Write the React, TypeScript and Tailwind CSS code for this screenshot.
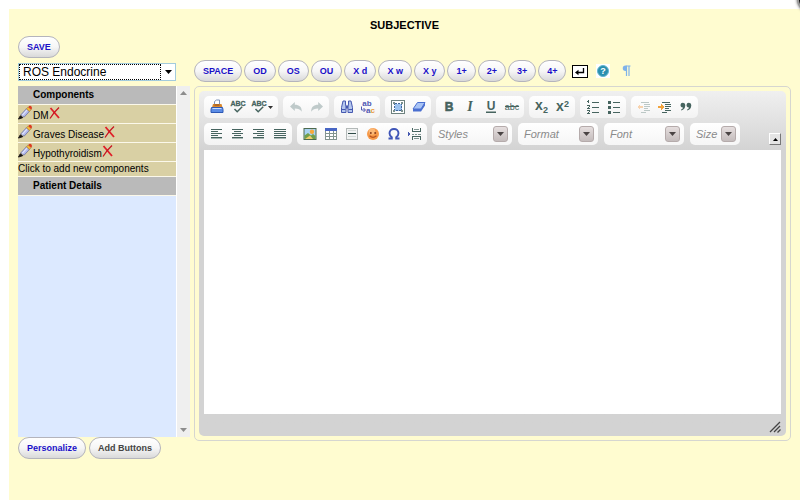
import { useState } from "react";
import type { ReactNode } from "react";

const TEAL = "#46645f";

function Icon({ children, crisp = false }: { children: ReactNode; crisp?: boolean }) {
  return (
    <svg
      viewBox="0 0 16 16"
      className="h-4 w-4 shrink-0 overflow-visible"
      shapeRendering={crisp ? "crispEdges" : "auto"}
      fontFamily="'Liberation Sans', Arial, sans-serif"
      aria-hidden
    >
      {children}
    </svg>
  );
}

/* Horizontal strokes given as [x, y, width] */
function Lines({ rows, color = TEAL }: { rows: number[][]; color?: string }) {
  return (
    <>
      {rows.map(([x, y, w]) => (
        <rect key={`${x}-${y}`} x={x} y={y} width={w} height="1" fill={color} />
      ))}
    </>
  );
}

const PrintIcon = () => (
  <Icon>
    <path d="M5.5 6.5v-4l2-1.500h3v5.500z" fill="#fff" stroke="#7d93b8" />
    <path d="M4 5h8.500l1 3.500H3z" fill="#d9882f" />
    <path d="M5.500 6h5" stroke="#8a4a18" />
    <path d="M2.500 8.500h11l.500 2v3H2v-3z" fill="#5b8ce6" stroke="#2d58b4" />
    <path d="M3.500 9.500h9" stroke="#c9dcfa" />
  </Icon>
);

const SpellIcon = () => (
  <Icon>
    <text x="8" y="7" textAnchor="middle" fontSize="7" fontWeight="700" fill={TEAL} stroke={TEAL} strokeWidth=".3">
      ABC
    </text>
    <path d="M4.500 10 7.200 12.800l5-5" fill="none" stroke={TEAL} strokeWidth="1.500" />
  </Icon>
);

const UndoIcon = () => (
  <Icon>
    <path d="M2 7.500 6.800 3v2.800c4.500 0 7 2 7 7-1.500-2.700-3.700-3.400-7-3.400V12z" fill="#bfcaca" />
  </Icon>
);

const RedoIcon = () => (
  <Icon>
    <path d="M14 7.500 9.200 3v2.800c-4.500 0-7 2-7 7 1.500-2.700 3.700-3.400 7-3.400V12z" fill="#bfcaca" />
  </Icon>
);

const FindIcon = () => (
  <Icon>
    <path d="M4 2h2.500v3L7 8v5.500H2.500V8.500zM12 2H9.500v3L9 8v5.500h4.500V8.500z" fill="#b4c6ee" stroke="#4659b0" />
    <path d="M7 6.500h2v3H7z" fill="#4659b0" />
    <path d="M3 10.500h3.500M9.500 10.500H13" stroke="#4659b0" />
  </Icon>
);

const ReplaceIcon = () => (
  <Icon>
    <text x="7" y="6.500" textAnchor="middle" fontSize="8" fontWeight="700" fill="#5058b4">
      ab
    </text>
    <text x="6" y="14" fontSize="8" fontWeight="700" fill="#5058b4">
      a<tspan fill="#e89a3a">c</tspan>
    </text>
    <path d="M1.500 7.500v3.500h3.500M3.500 9 5.500 11l-2 2" fill="none" stroke="#5058b4" />
  </Icon>
);

const SelectAllIcon = () => (
  <Icon crisp>
    <rect x="1.500" y="1.500" width="13" height="13" fill="#fff" stroke="#6e827f" />
    <rect x="4.500" y="4.500" width="7" height="7" fill="#9cc3ef" stroke="#41679a" strokeDasharray="2 1" />
    <path d="M3 3h2v2H3zM11 3h2v2h-2zM3 11h2v2H3zM11 11h2v2h-2z" fill="#7d928f" />
  </Icon>
);

const EraserIcon = () => (
  <Icon>
    <path d="M2 10 6.500 3.500h7.500L10 10z" fill="#a9c4f5" stroke="#4a6fd0" strokeLinejoin="round" />
    <path d="M2 10h8l4-6.500v3L10 12.500H2z" fill="#4a6fd0" />
  </Icon>
);

const BoldIcon = () => (
  <Icon>
    <text x="8" y="12" textAnchor="middle" fontSize="12" fontWeight="700" fill={TEAL} stroke={TEAL} strokeWidth=".6">
      B
    </text>
  </Icon>
);

const ItalicIcon = () => (
  <Icon>
    <text
      x="8"
      y="12"
      textAnchor="middle"
      fontSize="14"
      fontWeight="700"
      fontStyle="italic"
      fontFamily="'Liberation Serif', serif"
      fill={TEAL}
    >
      I
    </text>
  </Icon>
);

const UnderlineIcon = () => (
  <Icon>
    <text x="8" y="11" textAnchor="middle" fontSize="12" fontWeight="700" fill={TEAL}>
      U
    </text>
    <rect x="3" y="12.500" width="10" height="1.500" fill={TEAL} />
  </Icon>
);

const StrikeIcon = () => (
  <Icon>
    <text x="8" y="10.500" textAnchor="middle" fontSize="9" fill={TEAL}>
      abc
    </text>
    <rect x="1" y="7" width="14" height="1" fill={TEAL} />
  </Icon>
);

const SubscriptIcon = () => (
  <Icon>
    <text x="1" y="11" fontSize="14" fontWeight="700" fill={TEAL}>
      x
    </text>
    <text x="9" y="13.500" fontSize="9" fontWeight="700" fill={TEAL}>
      2
    </text>
  </Icon>
);

const SuperscriptIcon = () => (
  <Icon>
    <text x="1" y="12" fontSize="14" fontWeight="700" fill={TEAL}>
      x
    </text>
    <text x="9" y="7.500" fontSize="9" fontWeight="700" fill={TEAL}>
      2
    </text>
  </Icon>
);

const NumberedIcon = () => (
  <Icon crisp>
    <path d="M3 1h1v3H3zM2 2h1v1H2zM2 6h3v1H2zM4 7h1v1H4zM3 8h1v1H3zM2 9h3v1H2zM2 11h3v1H2zM4 12h1v1H4zM3 13h1v1H3zM2 14h3v1H2z" fill={TEAL} />
    <Lines rows={[[7, 3, 7], [7, 8, 7], [7, 13, 7]]} />
  </Icon>
);

const BulletedIcon = () => (
  <Icon crisp>
    <path d="M2 2h3v3H2zM2 7h3v3H2zM2 12h3v3H2z" fill={TEAL} />
    <Lines rows={[[7, 3, 7], [7, 8, 7], [7, 13, 7]]} />
  </Icon>
);

const OutdentIcon = () => (
  <Icon crisp>
    <Lines rows={[[5, 3, 8], [8, 5, 6], [8, 7, 6], [8, 9, 4], [8, 11, 6], [5, 13, 5]]} color="#bcc8c6" />
    <path d="M1 8l3-3v2h3v2H4v2z" fill="#f8d3ae" />
  </Icon>
);

const IndentIcon = () => (
  <Icon crisp>
    <Lines rows={[[5, 3, 8], [8, 5, 6], [8, 7, 6], [8, 9, 4], [8, 11, 6], [5, 13, 5]]} />
    <path d="M7 8 4 5v2H1v2h3v2z" fill="#f2a33c" />
  </Icon>
);

const QuoteIcon = () => (
  <Icon>
    <path
      d="M2.500 6a2.400 2.400 0 1 1 4.800.200C7.200 9 5.800 10.800 3.300 11.500l-.3-1c1.200-.500 1.800-1.200 2-2.100C3.500 8.600 2.500 7.500 2.500 6zM8.500 6a2.400 2.400 0 1 1 4.800.200c-.1 2.800-1.500 4.600-4 5.300l-.3-1c1.200-.500 1.800-1.200 2-2.100C9.500 8.600 8.500 7.500 8.500 6z"
      fill={TEAL}
    />
  </Icon>
);

const ALIGN_Y = [3, 5, 7, 9, 11];

const AlignLeftIcon = () => (
  <Icon crisp>
    <Lines rows={ALIGN_Y.map((y, i) => [2, y, i % 2 ? 7 : 11])} />
    <Lines rows={[[2, 12, 11]]} color="#a9b8b5" />
  </Icon>
);

const AlignCenterIcon = () => (
  <Icon crisp>
    <Lines rows={ALIGN_Y.map((y, i) => (i % 2 ? [4, y, 7] : [2, y, 11]))} />
    <Lines rows={[[2, 12, 11]]} color="#a9b8b5" />
  </Icon>
);

const AlignRightIcon = () => (
  <Icon crisp>
    <Lines rows={ALIGN_Y.map((y, i) => (i % 2 ? [6, y, 7] : [2, y, 11]))} />
    <Lines rows={[[2, 12, 11]]} color="#a9b8b5" />
  </Icon>
);

const JustifyIcon = () => (
  <Icon crisp>
    <Lines rows={ALIGN_Y.map((y) => [2, y, 12])} />
    <Lines rows={[[2, 12, 12]]} color="#a9b8b5" />
  </Icon>
);

const ImageIcon = () => (
  <Icon>
    <rect x="2" y="2.500" width="12" height="11" fill="#a9d3f2" stroke="#4d6a4f" />
    <path d="M2.500 13V9.500L6 7l3 2.500L11 8l2.500 2v3z" fill="#71a04a" />
    <circle cx="10" cy="5.800" r="2.200" fill="#f6a93b" />
    <path d="M3 13 8 9.500 11 13z" fill="#f0cf6b" />
  </Icon>
);

const TableIcon = () => (
  <Icon crisp>
    <rect x="2" y="2" width="12" height="12" fill="#82948f" />
    <rect x="2" y="2" width="12" height="3" fill="#4866c4" />
    <path d="M3 5h3v2H3zM7 5h3v2H7zM11 5h2v2h-2zM3 8h3v2H3zM7 8h3v2H7zM11 8h2v2h-2zM3 11h3v2H3zM7 11h3v2H7zM11 11h2v2h-2z" fill="#fff" />
  </Icon>
);

const RuleIcon = () => (
  <Icon crisp>
    <rect x="2" y="2" width="12" height="12" fill="#b3b9b8" />
    <rect x="3" y="3" width="10" height="10" fill="#f1f3f3" />
    <rect x="4" y="7" width="8" height="1" fill="#2f4b47" />
    <Lines rows={[[4, 4, 8], [4, 10, 8]]} color="#d3d8d7" />
  </Icon>
);

const SmileyIcon = () => (
  <Icon>
    <circle cx="8" cy="8" r="6" fill="#f79a4a" />
    <circle cx="7" cy="5.500" r="3.200" fill="#fbb877" />
    <circle cx="5.800" cy="7" r="1" fill="#8a3f1d" />
    <circle cx="10.200" cy="7" r="1" fill="#8a3f1d" />
    <path d="M4.500 9.800q3.500 3 7 0" fill="none" stroke="#b8531f" strokeWidth="1.200" />
  </Icon>
);

const OmegaIcon = () => (
  <Icon>
    <path
      d="M2.500 12.500h3.300v-1.300C4 10 3.500 8.700 3.500 7.300 3.500 4.800 5.400 3 8 3s4.500 1.800 4.500 4.300c0 1.400-.5 2.700-2.300 3.900v1.300h3.300"
      fill="none"
      stroke="#3f55b8"
      strokeWidth="1.900"
    />
  </Icon>
);

const PageBreakIcon = () => (
  <Icon crisp>
    <path d="M5.500 2v3.500h8V2M5.500 14v-3.500h8V14" fill="none" stroke={TEAL} />
    <Lines rows={[[7, 3, 5], [5, 8, 2], [8, 8, 2], [11, 8, 3], [7, 12, 5]]} color="#7f9491" />
    <path d="M1 6v4l2-2z" fill="#4659b0" />
  </Icon>
);

const PencilIcon = () => (
  <svg viewBox="0 0 16 16" className="h-[15px] w-[15px] shrink-0" aria-hidden>
    <path d="M.5 15 2.500 11.500 5 13.500z" fill="#1c1816" stroke="#1c1816" />
    <path d="M3 10.500 9 4l3 3-5.500 6z" fill="#b4bbee" stroke="#6a6e98" strokeWidth=".8" />
    <path d="M4.500 11 10 5" stroke="#e4e7fb" strokeWidth="1.200" />
    <path d="M9 4l2-2 3 3-2 2z" fill="#f5b53a" stroke="#8c6420" strokeWidth=".5" />
    <path d="M11 2Q12.500 0 14.200 1.200 16 3 14 5z" fill="#dc3a20" />
  </svg>
);

const CrossIcon = () => (
  <svg viewBox="0 0 12 12" className="h-3 w-3 shrink-0" aria-hidden>
    <path d="M1.500 1 10 11" stroke="#e01e28" strokeWidth="1.800" />
    <path d="M10 .5Q5 5 1 11.500" fill="none" stroke="#c81420" strokeWidth="1.300" />
  </svg>
);

const HelpIcon = () => (
  <svg viewBox="0 0 14 14" className="h-[14px] w-[14px] bg-white" aria-hidden>
    <circle cx="7" cy="7" r="5.500" fill="#2a8fb0" stroke="#63b6ce" />
    <text x="7" y="10" textAnchor="middle" fontSize="9" fontWeight="700" fill="#fff" fontFamily="'Liberation Sans', Arial, sans-serif">
      ?
    </text>
  </svg>
);

const ReturnIcon = () => (
  <svg viewBox="0 0 16 13" className="h-[13px] w-4" aria-hidden>
    <rect x=".5" y=".5" width="15" height="12" fill="#fff" stroke="#000" />
    <path d="M11.500 3v4.500H5" fill="none" stroke="#000" strokeWidth="1.300" />
    <path d="M3 7.500 6.500 4.800v5.400z" fill="#000" />
  </svg>
);

const PilcrowIcon = () => (
  <svg viewBox="0 0 9 12" className="h-3 w-[9px]" aria-hidden>
    <path d="M8.500 1H4M4.500 1v10M7 1v10" fill="none" stroke="#7fb2ea" strokeWidth="1.200" />
    <path d="M4.500.5H3.500a2.700 2.700 0 0 0 0 5.500h1z" fill="#7fb2ea" />
  </svg>
);

interface Tool {
  label: string;
  icon: ReactNode;
  menu?: boolean;
}

const firstRow: Tool[][] = [
  [
    { label: "Print", icon: <PrintIcon /> },
    { label: "Check Spelling", icon: <SpellIcon /> },
    { label: "Spell Check As You Type", icon: <SpellIcon />, menu: true },
  ],
  [
    { label: "Undo", icon: <UndoIcon /> },
    { label: "Redo", icon: <RedoIcon /> },
  ],
  [
    { label: "Find", icon: <FindIcon /> },
    { label: "Replace", icon: <ReplaceIcon /> },
  ],
  [
    { label: "Select All", icon: <SelectAllIcon /> },
    { label: "Remove Format", icon: <EraserIcon /> },
  ],
  [
    { label: "Bold", icon: <BoldIcon /> },
    { label: "Italic", icon: <ItalicIcon /> },
    { label: "Underline", icon: <UnderlineIcon /> },
    { label: "Strike Through", icon: <StrikeIcon /> },
  ],
  [
    { label: "Subscript", icon: <SubscriptIcon /> },
    { label: "Superscript", icon: <SuperscriptIcon /> },
  ],
  [
    { label: "Numbered List", icon: <NumberedIcon /> },
    { label: "Bulleted List", icon: <BulletedIcon /> },
  ],
  [
    { label: "Decrease Indent", icon: <OutdentIcon /> },
    { label: "Increase Indent", icon: <IndentIcon /> },
    { label: "Block Quote", icon: <QuoteIcon /> },
  ],
];

const secondRow: Tool[][] = [
  [
    { label: "Align Left", icon: <AlignLeftIcon /> },
    { label: "Center", icon: <AlignCenterIcon /> },
    { label: "Align Right", icon: <AlignRightIcon /> },
    { label: "Justify", icon: <JustifyIcon /> },
  ],
  [
    { label: "Image", icon: <ImageIcon /> },
    { label: "Table", icon: <TableIcon /> },
    { label: "Horizontal Line", icon: <RuleIcon /> },
    { label: "Smiley", icon: <SmileyIcon /> },
    { label: "Special Character", icon: <OmegaIcon /> },
    { label: "Page Break", icon: <PageBreakIcon /> },
  ],
];

const combos = [
  { label: "Styles", width: "w-20" },
  { label: "Format", width: "w-20" },
  { label: "Font", width: "w-20" },
  { label: "Size", width: "w-[50px]" },
];

const snippets = ["SPACE", "OD", "OS", "OU", "X d", "X w", "X y", "1+", "2+", "3+", "4+"];

function PillButton({ children, muted = false, onClick }: { children: ReactNode; muted?: boolean; onClick?: () => void }) {
  return (
    <button
      onClick={onClick}
      className={`h-[22px] shrink-0 whitespace-nowrap rounded-full border border-[#b4b4bc] bg-linear-to-b from-white via-[#f6f6f6] to-[#d9d9d9] px-2 pt-0.5 text-[9px] font-bold ${
        muted ? "text-[#444444]" : "text-[#1a10c8]"
      }`}
    >
      {children}
    </button>
  );
}

function ToolGroup({ tools }: { tools: Tool[] }) {
  return (
    <div className="flex h-[22px] items-center rounded-[5px] bg-linear-to-b from-white to-[#f3f3f3] px-0.5">
      {tools.map((t) => (
        <button
          key={t.label}
          title={t.label}
          aria-label={t.label}
          className={`flex h-5 items-center justify-center ${t.menu ? "w-7 gap-px" : "w-[21px]"}`}
        >
          {t.icon}
          {t.menu && (
            <svg viewBox="0 0 5 3" className="h-[3px] w-[5px]" aria-hidden>
              <path d="M0 0h5L2.500 3z" fill="#333" />
            </svg>
          )}
        </button>
      ))}
    </div>
  );
}

function Combo({ label, width }: { label: string; width: string }) {
  return (
    <div className={`relative h-[22px] rounded-[5px] bg-linear-to-b from-white to-[#f6f6f6] ${width}`}>
      <select
        aria-label={label}
        className="block h-full w-full appearance-none bg-transparent pl-1.5 text-[11px] italic text-[#8a8a8a] outline-none"
      >
        <option>{label}</option>
      </select>
      <span className="pointer-events-none absolute top-[3px] right-1 flex h-4 w-[15px] items-center justify-center rounded-[3px] border border-[#b5abab] bg-linear-to-b from-[#e6dfdf] to-[#c4bcbc]">
        <svg viewBox="0 0 7 4" className="h-1 w-[7px]" aria-hidden>
          <path d="M0 0h7L3.500 4z" fill="#4a4444" />
        </svg>
      </span>
    </div>
  );
}

function SectionHeader({ children }: { children: ReactNode }) {
  return <h2 className="bg-[#bababa] pl-[15px] text-[10px] leading-[18px] font-bold text-black">{children}</h2>;
}

function Sidebar() {
  const [items, setItems] = useState(["DM", "Graves Disease", "Hypothyroidism"]);

  return (
    <div className="flex h-[351px]">
      <div className="flex min-w-0 flex-1 flex-col gap-px bg-[#fbf8ea]">
        <SectionHeader>Components</SectionHeader>
        <ul className="flex flex-col gap-px">
          {items.map((name) => (
            <li key={name} className="flex h-[18px] items-start bg-[#d9d0a4] text-[10px] text-black">
              <button aria-label={`Edit ${name}`}>
                <PencilIcon />
              </button>
              <span className="pt-1 leading-[14px]">{name}</span>
              <button aria-label={`Remove ${name}`} className="pt-0.5" onClick={() => setItems(items.filter((i) => i !== name))}>
                <CrossIcon />
              </button>
            </li>
          ))}
        </ul>
        <button className="bg-[#d9d0a4] text-left text-[10px] leading-[14px] whitespace-nowrap text-black">
          Click to add new components
        </button>
        <SectionHeader>Patient Details</SectionHeader>
        <div className="flex-1 bg-[#dce9ff]" />
      </div>
      {/* Scroll track */}
      <div className="flex w-[14px] flex-col items-center justify-between border-l border-white bg-[#efefef] py-[5px]">
        <svg viewBox="0 0 7 4" className="h-1 w-[7px]" aria-hidden>
          <path d="M0 4h7L3.500 0z" fill="#8c8c8c" />
        </svg>
        <svg viewBox="0 0 7 4" className="h-1 w-[7px]" aria-hidden>
          <path d="M0 0h7L3.500 4z" fill="#8c8c8c" />
        </svg>
      </div>
    </div>
  );
}

function Editor() {
  const [text, setText] = useState("");

  return (
    <div className="rounded-[5px] border border-[#d6d6d0] p-1">
      <div className="rounded-[5px] bg-[#d3d3d3] bg-linear-to-b from-[#f0f0f0] to-[#d3d3d3] to-[60px] px-[5px] pt-[5px]">
        <div className="flex items-end justify-between">
          <div className="flex flex-col gap-[5px]">
            <div className="flex flex-wrap gap-[5px]">
              {firstRow.map((tools) => (
                <ToolGroup key={tools[0].label} tools={tools} />
              ))}
            </div>
            <div className="flex flex-wrap gap-[5px]">
              {secondRow.map((tools) => (
                <ToolGroup key={tools[0].label} tools={tools} />
              ))}
              <div className="flex gap-1.5">
                {combos.map((c) => (
                  <Combo key={c.label} label={c.label} width={c.width} />
                ))}
              </div>
            </div>
          </div>
          <button
            aria-label="Collapse Toolbar"
            className="flex h-3 w-3 items-center justify-center border border-t-white border-r-[#777777] border-b-[#777777] border-l-white bg-[#e4e4e4]"
          >
            <svg viewBox="0 0 5 3" className="h-[3px] w-[5px]" aria-hidden>
              <path d="M0 3h5L2.500 0z" fill="#000" />
            </svg>
          </button>
        </div>
        <textarea
          aria-label="Subjective notes"
          value={text}
          onChange={(e) => setText(e.target.value)}
          className="mt-[5px] block h-[264px] w-full resize-none bg-white p-2 text-xs outline-none"
        />
        <div className="flex h-[22px] items-center justify-end pt-1">
          <svg viewBox="0 0 12 12" className="h-3 w-3" aria-hidden>
            <path d="M1 11 11 1M5 11l6-6M8.500 11.500l3-3" stroke="#444" strokeWidth="1.300" />
          </svg>
        </div>
      </div>
    </div>
  );
}

export default function App() {
  return (
    <div className="relative min-h-screen overflow-hidden bg-white pt-[9px] pl-[9px] font-['Liberation_Sans',Arial,sans-serif]">
      <main className="min-h-[calc(100vh-9px)] bg-[#fffcd0] px-[9px] pt-2">
        <h1 className="text-center text-[11px] leading-4 font-bold text-black">SUBJECTIVE</h1>
        <div className="mt-[3px] flex">
          <PillButton>SAVE</PillButton>
        </div>

        <div className="mt-0.5 flex items-start gap-1">
          <section className="w-[172px] shrink-0 pt-[3px]">
            <div className="relative mr-[14px]">
              <select
                aria-label="Template"
                className="block h-[18px] w-full appearance-none border border-[#a3cbdc] bg-white pl-1 text-[12px] leading-4 text-black outline-none"
              >
                <option>ROS Endocrine</option>
              </select>
              <span className="pointer-events-none absolute inset-y-px right-[15px] left-px border border-dotted border-black" />
              <svg viewBox="0 0 7 4" className="pointer-events-none absolute top-[7px] right-1 h-1 w-[7px]" aria-hidden>
                <path d="M0 0h7L3.500 4z" fill="#000" />
              </svg>
            </div>
            <div className="mt-[5px]">
              <Sidebar />
            </div>
            <div className="flex gap-[3px]">
              <PillButton>Personalize</PillButton>
              <PillButton muted>Add Buttons</PillButton>
            </div>
          </section>

          <section className="min-w-0 flex-1">
            <div className="mb-1 flex items-center gap-0.5">
              {snippets.map((s) => (
                <PillButton key={s}>{s}</PillButton>
              ))}
              <div className="ml-1 flex items-center gap-2">
                <button aria-label="New line">
                  <ReturnIcon />
                </button>
                <button aria-label="Help">
                  <HelpIcon />
                </button>
                <button aria-label="Paragraph marks" className="ml-1">
                  <PilcrowIcon />
                </button>
              </div>
            </div>
            <Editor />
          </section>
        </div>
      </main>

      {/* Edge of the dialog's round close button */}
      <span className="absolute -top-[15px] -right-[25px] h-7 w-7 rounded-full border-2 border-[#999999] bg-black shadow-[0_0_3px_#555555]" />
    </div>
  );
}
